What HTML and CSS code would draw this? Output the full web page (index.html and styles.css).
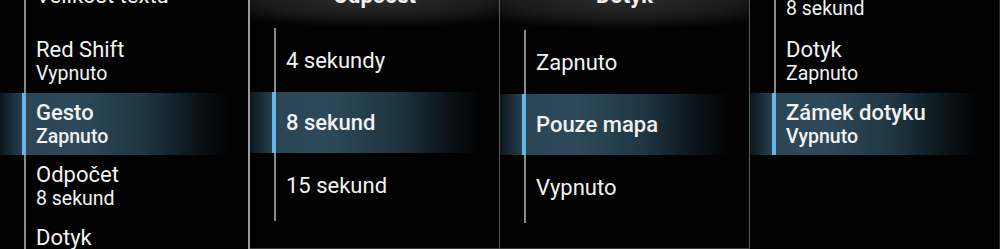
FILE: index.html
```html
<!DOCTYPE html>
<html lang="cs">
<head>
<meta charset="UTF-8" />
<title>Nastavení</title>
<link rel="stylesheet" href="styles.css">
</head>
<body>
  <div class="strip">

    <!-- Hlavní seznam nastavení -->
    <section class="panel panel-menu">
      <ul class="list">
        <li class="row row-top">
          <span class="title">Velikost textu</span>
        </li>
        <li class="row">
          <span class="title">Red Shift</span>
          <span class="value">Vypnuto</span>
        </li>
        <li class="row active">
          <span class="title">Gesto</span>
          <span class="value">Zapnuto</span>
        </li>
        <li class="row">
          <span class="title">Odpočet</span>
          <span class="value">8 sekund</span>
        </li>
        <li class="row">
          <span class="title">Dotyk</span>
          <span class="value">Zapnuto</span>
        </li>
      </ul>
    </section>

    <!-- Výběr odpočtu -->
    <section class="panel panel-pick">
      <div class="head"><span>Odpočet</span></div>
      <ul class="list options">
        <li class="opt">4 sekundy</li>
        <li class="opt active">8 sekund</li>
        <li class="opt">15 sekund</li>
      </ul>
    </section>

    <!-- Výběr dotyku -->
    <section class="panel panel-pick panel-touch">
      <div class="head"><span>Dotyk</span></div>
      <ul class="list options">
        <li class="opt">Zapnuto</li>
        <li class="opt active">Pouze mapa</li>
        <li class="opt">Vypnuto</li>
      </ul>
    </section>

    <!-- Konec seznamu -->
    <section class="panel panel-end">
      <ul class="list">
        <li class="row row-cut">
          <span class="value">8 sekund</span>
        </li>
        <li class="row">
          <span class="title">Dotyk</span>
          <span class="value">Zapnuto</span>
        </li>
        <li class="row active">
          <span class="title">Zámek dotyku</span>
          <span class="value">Vypnuto</span>
        </li>
      </ul>
    </section>

  </div>
</body>
</html>
```

FILE: styles.css
```css
/* Reset */
* {
  box-sizing: border-box;
}
body {
  margin: 0;
  background: #000;
  color: #f2f2f2;
  font-family: Roboto, 'Noto Sans', sans-serif;
}
ul {
  list-style: none;
  margin: 0;
  padding: 0;
}

.strip {
  display: flex;
  width: 1000px;
  height: 249px;
  overflow: hidden;
}

.panel {
  position: relative;
  width: 250px;
  height: 249px;
  overflow: hidden;
  background: #020202;
}
.panel-menu {
  border-right: 2px solid #9a9a9a;
}
.panel-pick {
  border-right: 1px solid #5a5a5a;
  border-bottom: 1px solid #3a3a3a;
}
.panel-end {
  border-right: 1px solid #2a2a2a;
}

/* Svislá čára posuvníku */
.list {
  position: relative;
}
.list::before {
  content: "";
  position: absolute;
  left: 24px;
  top: 0;
  bottom: 0;
  width: 2px;
  background: #8a8a8a;
}

/* Řádky hlavního menu */
.row {
  position: relative;
  display: flex;
  flex-direction: column;
  justify-content: center;
  flex-shrink: 0;
  height: 63px;
  padding-left: 36px;
}
.active.row {
  height: 62px;
}
.row-top {
  height: 30px;
  justify-content: flex-start;
}
.row-top .title {
  margin-top: -17px;
}
.row-cut {
  height: 30px;
  justify-content: flex-end;
  padding-bottom: 9px;
}
.title {
  font-size: 22px;
  line-height: 25px;
}
.value {
  font-size: 19.5px;
  line-height: 24px;
}

/* Vybraná položka */
.active {
  background: linear-gradient(to right, #0b161c 0%, #2b4555 10%, #2e4a5a 30%, #1f3542 58%, #0a1217 80%, #020202 92%);
}
.active::before {
  content: "";
  position: absolute;
  left: 22px;
  top: 0;
  bottom: 0;
  width: 4px;
  background: #63b6e6;
  z-index: 1;
}
.active .title,
.active .value {
  font-weight: 500;
}

/* Výběrové panely */
.head {
  display: flow-root;
  height: 28px;
  margin: 0 -30px;
  background: radial-gradient(ellipse 60% 100% at 50% 0%, #2c2c2c 0%, #1a1a1a 60%, transparent 100%);
  text-align: center;
}
.panel-touch .head {
  height: 30px;
}
.head span {
  display: block;
  margin-top: -17px;
  font-size: 22px;
  font-weight: 700;
}
.options {
  height: 193px;
}
.opt {
  position: relative;
  display: flex;
  align-items: center;
  height: 64px;
  padding-left: 36px;
  font-size: 22px;
}
.opt.active {
  height: 61px;
  font-weight: 500;
}
```
